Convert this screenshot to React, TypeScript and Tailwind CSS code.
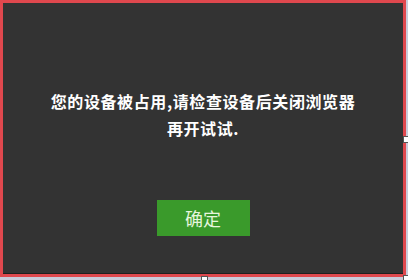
export default function App() {
  return (
    <div className="relative w-[408px] h-[280px] overflow-hidden bg-[#c9cbda] font-['Noto_Sans_CJK_SC','Noto_Sans',sans-serif]">
      <div className="w-[406px] h-[277px] border-[3px] border-[#e0484e] bg-[#333333]">
        <div className="flex h-full flex-col items-center border-b border-[#1f1f1f] pt-[85px]">
          <p className="text-center text-[16px] leading-[27px] tracking-[0.6px] font-semibold text-white">
            您的设备被占用,请检查设备后关闭浏览器
            <br />
            再开试试.
          </p>
          <button className="mt-[58px] flex h-[36px] w-[93px] items-center justify-center bg-[#3a9a2b] text-[18px] text-[#e6f5dc]">
            确定
          </button>
        </div>
      </div>
      {/* selection handles */}
      <span className="absolute left-[201px] top-[276px] h-[6px] w-[7px] border border-[#555] bg-white" />
      <span className="absolute left-[403px] top-[136px] h-[7px] w-[6px] border border-[#555] bg-white" />
      <span className="absolute left-[403px] top-[275px] h-[6px] w-[6px] border border-[#555] bg-white" />
    </div>
  );
}
